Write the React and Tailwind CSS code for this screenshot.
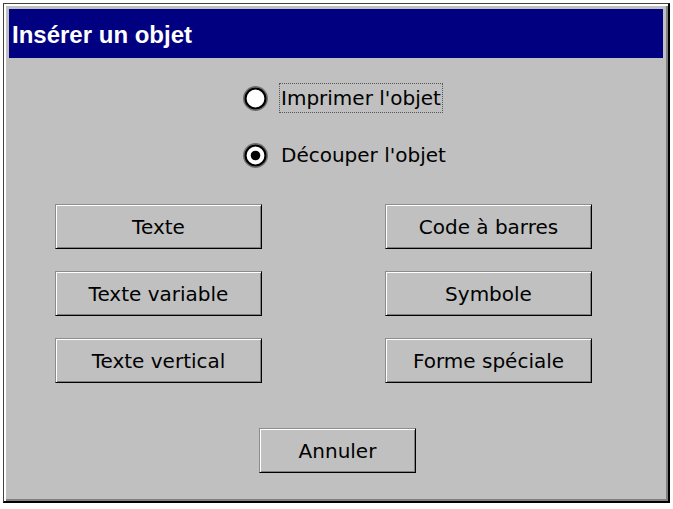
import React from 'react';

const body = { fontFamily: '"DejaVu Sans", Verdana, sans-serif' };

const Radio = ({ checked }) => (
  <svg width="25" height="25" viewBox="0 0 25 25" className="shrink-0">
    <circle cx="12.5" cy="12.5" r="11.75" fill="none" stroke="#6f6f6f" strokeWidth="1.5" />
    <circle cx="12.5" cy="12.5" r="10" fill="#fff" stroke="#000" strokeWidth="2.2" />
    {checked && <circle cx="12.5" cy="12.5" r="4.8" fill="#000" />}
  </svg>
);

const RadioRow = ({ label, checked, focused, className = '' }) => (
  <div className={`flex items-center h-[30px] ${className}`}>
    <Radio checked={checked} />
    <span
      className={`ml-[11px] h-[30px] flex items-center px-[1px] text-[20px] text-black border border-dotted ${
        focused ? 'border-[#555]' : 'border-transparent'
      }`}
    >
      {label}
    </span>
  </div>
);

const WinButton = ({ children, className = '' }) => (
  <button
    className={`h-[45px] flex items-center justify-center text-[20px] text-black bg-[#c0c0c0] border border-t-[#8c8c8c] border-l-[#8c8c8c] border-r-black border-b-black shadow-[inset_1px_1px_0_#fff,inset_-1px_-1px_0_#808080] ${className}`}
    style={body}
  >
    {children}
  </button>
);

export default function App() {
  return (
    <div className="min-h-screen bg-white pt-[3px] pl-[3px]">
      <div className="w-[667px] h-[500px] bg-[#c0c0c0] border-t border-l border-r-2 border-b-2 border-t-[#404040] border-l-[#404040] border-r-black border-b-black shadow-[inset_2px_2px_0_#fff,inset_-2px_-2px_0_#808080] p-[5px] flex flex-col">
        {/* Title bar */}
        <div className="h-[49px] bg-[#000080] flex items-center pl-[3px] pt-[2px]">
          <span
            className="text-white text-[24px] font-bold"
            style={{ fontFamily: '"Liberation Sans", Arial, sans-serif' }}
          >
            Insérer un objet
          </span>
        </div>

        {/* Radio group */}
        <div className="pl-[234px] mt-[25px] flex flex-col gap-[27px]" style={body}>
          <RadioRow label="Imprimer l'objet" focused />
          <RadioRow label="Découper l'objet" checked />
        </div>

        {/* Object buttons */}
        <div className="mt-[34px] pl-[46px] grid grid-cols-[207px_207px] gap-x-[123px] gap-y-[22px]">
          <WinButton>Texte</WinButton>
          <WinButton>Code à barres</WinButton>
          <WinButton>Texte variable</WinButton>
          <WinButton>Symbole</WinButton>
          <WinButton>Texte vertical</WinButton>
          <WinButton>Forme spéciale</WinButton>
        </div>

        <WinButton className="mt-[45px] ml-[250px] w-[157px]">Annuler</WinButton>
      </div>
    </div>
  );
}
